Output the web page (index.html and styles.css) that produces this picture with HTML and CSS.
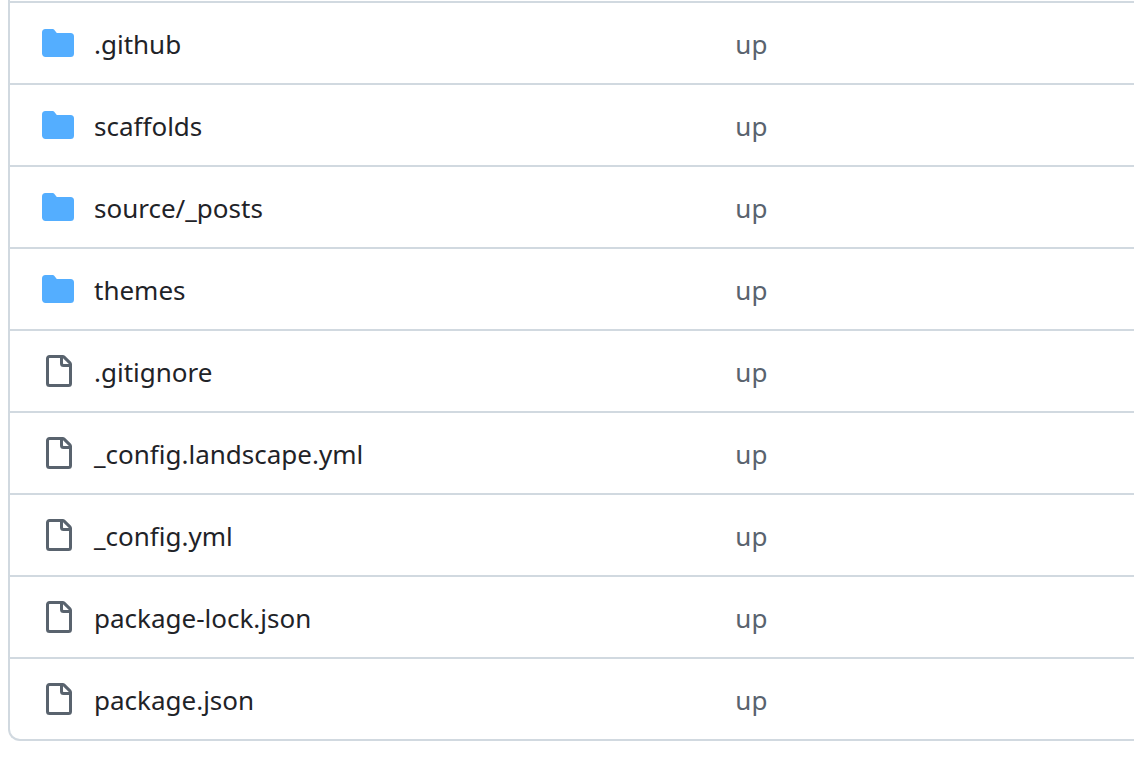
FILE: index.html
```
<!DOCTYPE html>
<html lang="en">
<head>
	<meta charset="utf-8" />
	<title>Files</title>
	<link rel="stylesheet" href="styles.css">
</head>
<body>
	<svg class="sprite" aria-hidden="true">
		<symbol id="folder" viewBox="0 0 16 16">
			<path d="M1.75 1A1.75 1.75 0 0 0 0 2.75v10.5C0 14.216.784 15 1.75 15h12.5A1.75 1.75 0 0 0 16 13.25v-8.5A1.75 1.75 0 0 0 14.25 3H7.5a.25.25 0 0 1-.2-.1l-.9-1.2C6.07 1.26 5.55 1 5 1H1.75Z"/>
		</symbol>
		<symbol id="file" viewBox="0 0 16 16">
			<path d="M2 1.75C2 .784 2.784 0 3.75 0h6.586c.464 0 .909.184 1.237.513l2.914 2.914c.329.328.513.773.513 1.237v9.586A1.75 1.75 0 0 1 13.25 16h-9.5A1.75 1.75 0 0 1 2 14.25Zm1.75-.25a.25.25 0 0 0-.25.25v12.5c0 .138.112.25.25.25h9.5a.25.25 0 0 0 .25-.25V6h-2.75A1.75 1.75 0 0 1 9 4.25V1.5Zm6.75.062V4.25c0 .138.112.25.25.25h2.688l-.011-.013-2.914-2.914-.013-.011Z"/>
		</symbol>
	</svg>
	<div class="files">
		<table>
			<tbody>
				<tr>
					<td class="name"><div><svg class="icon folder"><use href="#folder"/></svg><a href="#">.github</a></div></td>
					<td class="message"><a href="#">up</a></td>
				</tr>
				<tr>
					<td class="name"><div><svg class="icon folder"><use href="#folder"/></svg><a href="#">scaffolds</a></div></td>
					<td class="message"><a href="#">up</a></td>
				</tr>
				<tr>
					<td class="name"><div><svg class="icon folder"><use href="#folder"/></svg><a href="#">source/_posts</a></div></td>
					<td class="message"><a href="#">up</a></td>
				</tr>
				<tr>
					<td class="name"><div><svg class="icon folder"><use href="#folder"/></svg><a href="#">themes</a></div></td>
					<td class="message"><a href="#">up</a></td>
				</tr>
				<tr>
					<td class="name"><div><svg class="icon"><use href="#file"/></svg><a href="#">.gitignore</a></div></td>
					<td class="message"><a href="#">up</a></td>
				</tr>
				<tr>
					<td class="name"><div><svg class="icon"><use href="#file"/></svg><a href="#">_config.landscape.yml</a></div></td>
					<td class="message"><a href="#">up</a></td>
				</tr>
				<tr>
					<td class="name"><div><svg class="icon"><use href="#file"/></svg><a href="#">_config.yml</a></div></td>
					<td class="message"><a href="#">up</a></td>
				</tr>
				<tr>
					<td class="name"><div><svg class="icon"><use href="#file"/></svg><a href="#">package-lock.json</a></div></td>
					<td class="message"><a href="#">up</a></td>
				</tr>
				<tr>
					<td class="name"><div><svg class="icon"><use href="#file"/></svg><a href="#">package.json</a></div></td>
					<td class="message"><a href="#">up</a></td>
				</tr>
			</tbody>
		</table>
	</div>
</body>
</html>
```
FILE: styles.css
```
* { box-sizing: border-box; }
body { margin: 0 0 0 8px; background-color: #fff; color: #1f2328; font-family: "Segoe UI", "Noto Sans", sans-serif; font-size: 26px; line-height: 42px; font-variant-ligatures: none; }
a { color: inherit; text-decoration: none; }
a:hover { text-decoration: underline; }
.sprite { display: none; }
/* file list */
.files { padding-top: 1px; border: solid #d1d9e0; border-width: 0 0 2px 2px; border-bottom-left-radius: 12px; }
table { width: 100%; table-layout: fixed; border-spacing: 0; }
td { padding: 20px 0 18px; border-top: 2px solid #d1d9e0; }
.name { width: 64%; padding-left: 32px; }
.name div { display: flex; align-items: flex-start; gap: 20px; }
.message { padding-left: 6px; color: #59636e; }
.icon { flex: none; width: 32px; height: 32px; margin-top: 4px; fill: #59636e; }
.folder { fill: #54aeff; }
```
